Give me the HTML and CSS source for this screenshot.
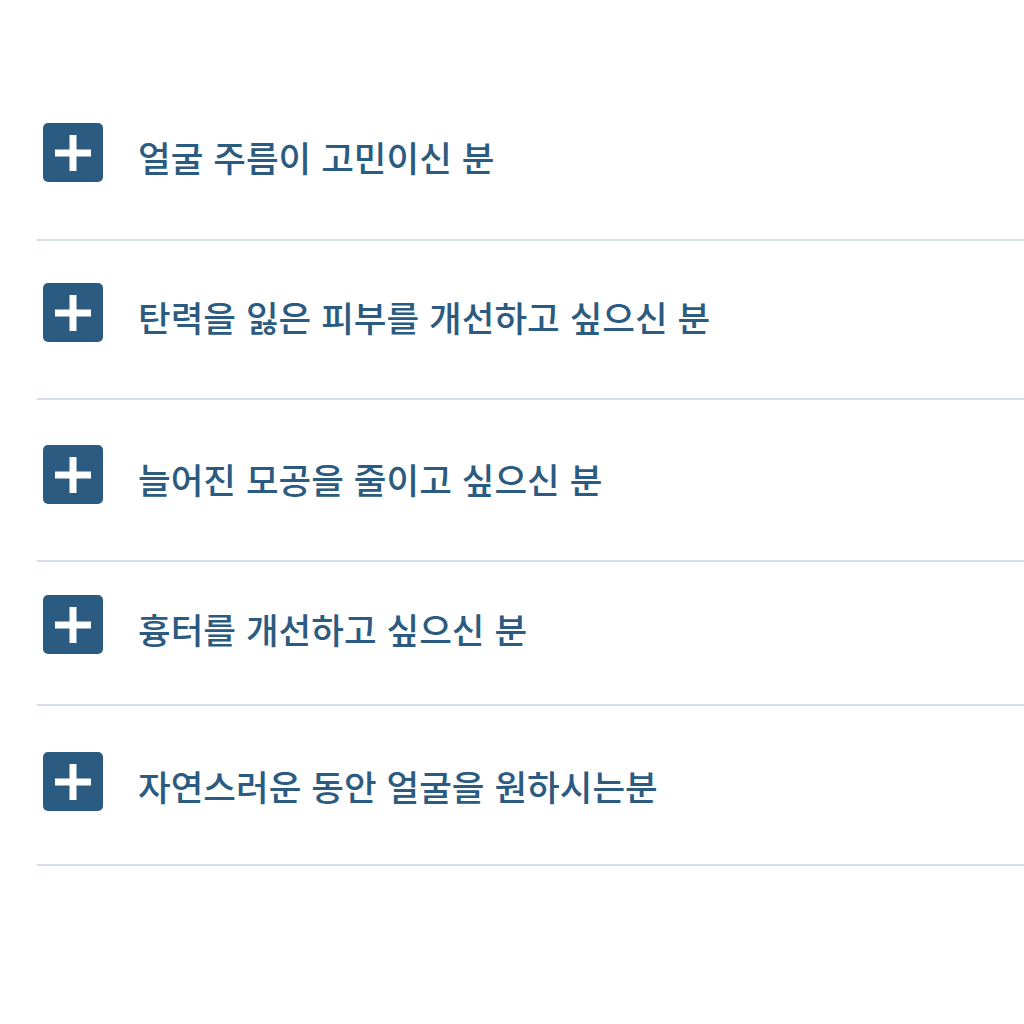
FILE: index.html
```html
<!DOCTYPE html>
<html lang="ko">
<head>
  <meta charset="UTF-8">
  <title>추천 대상</title>
  <link rel="stylesheet" href="styles.css">
</head>
<body>
<ul class="target-list">
  <li class="item item-1">
    <span class="plus"></span>
    <span class="label">얼굴 주름이 고민이신 분</span>
  </li>
  <li class="item item-2">
    <span class="plus"></span>
    <span class="label">탄력을 잃은 피부를 개선하고 싶으신 분</span>
  </li>
  <li class="item item-3">
    <span class="plus"></span>
    <span class="label">늘어진 모공을 줄이고 싶으신 분</span>
  </li>
  <li class="item item-4">
    <span class="plus"></span>
    <span class="label">흉터를 개선하고 싶으신 분</span>
  </li>
  <li class="item item-5">
    <span class="plus"></span>
    <span class="label">자연스러운 동안 얼굴을 원하시는분</span>
  </li>
</ul>
</body>
</html>
```

FILE: styles.css
```css
body { margin: 0; background: #fff; font-family: "Noto Sans CJK KR", "Noto Sans", sans-serif; }
.target-list { list-style: none; margin: 80px 0 0 37px; padding: 0; }
.item { display: flex; align-items: center; gap: 35px; padding: 43px 0 57px 6px; border-bottom: 2px solid #d6dfe9; }
.item-2 { padding-top: 42px; padding-bottom: 56px; }
.item-3 { padding-top: 45px; padding-bottom: 56px; }
.item-4 { padding-top: 33px; padding-bottom: 50px; }
.item-5 { padding-top: 46px; padding-bottom: 53px; }
.plus { position: relative; flex: none; width: 60px; height: 59px; background: #2b5b80; border-radius: 5px; }
.plus::before, .plus::after { content: ""; position: absolute; background: #fff; left: 50%; top: 50%; transform: translate(-50%, -50%); }
.plus::before { width: 36px; height: 7px; }
.plus::after { width: 7px; height: 36px; }
.label { color: #2b5b80; font-size: 35.5px; font-weight: 500; line-height: 1.2; padding-top: 10px; }
```
